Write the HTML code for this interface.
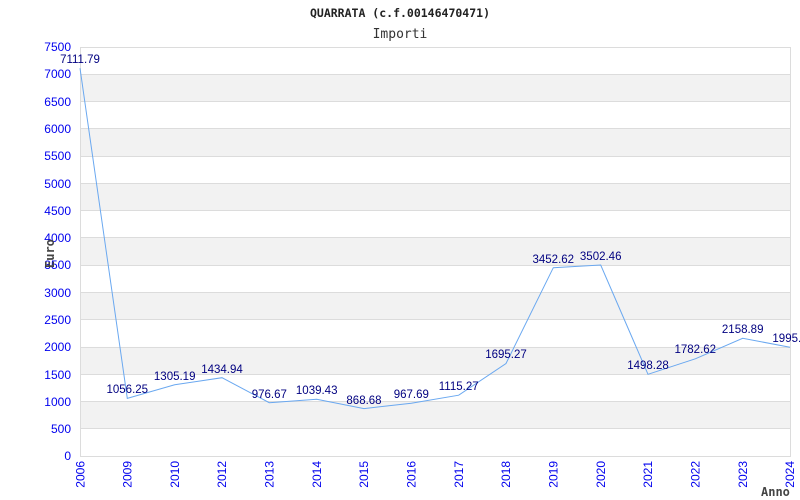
<!DOCTYPE html>
<html><head><meta charset="utf-8"><style>html,body{margin:0;padding:0;background:#fff}svg{display:block}</style></head><body>
<svg width="800" height="500" xmlns="http://www.w3.org/2000/svg">
<rect width="800" height="500" fill="#fff"/>
<text x="400" y="17" text-anchor="middle" font-family="DejaVu Sans Mono, Liberation Mono, monospace" font-weight="bold" font-size="11.5" fill="#222">QUARRATA (c.f.00146470471)</text>
<text x="400" y="38" text-anchor="middle" font-family="DejaVu Sans Mono, Liberation Mono, monospace" font-size="13" fill="#333">Importi</text>
<g fill="#f2f2f2">
<rect x="80" y="74.3" width="710" height="27.2"/>
<rect x="80" y="128.8" width="710" height="27.3"/>
<rect x="80" y="183.3" width="710" height="27.3"/>
<rect x="80" y="237.9" width="710" height="27.2"/>
<rect x="80" y="292.4" width="710" height="27.3"/>
<rect x="80" y="346.9" width="710" height="27.3"/>
<rect x="80" y="401.5" width="710" height="27.2"/>
</g>
<g stroke="#dcdcdc" stroke-width="1">
<line x1="80" x2="790" y1="47.5" y2="47.5"/><line x1="80" x2="790" y1="74.5" y2="74.5"/><line x1="80" x2="790" y1="101.5" y2="101.5"/><line x1="80" x2="790" y1="128.5" y2="128.5"/><line x1="80" x2="790" y1="156.5" y2="156.5"/><line x1="80" x2="790" y1="183.5" y2="183.5"/><line x1="80" x2="790" y1="210.5" y2="210.5"/><line x1="80" x2="790" y1="237.5" y2="237.5"/><line x1="80" x2="790" y1="265.5" y2="265.5"/><line x1="80" x2="790" y1="292.5" y2="292.5"/><line x1="80" x2="790" y1="319.5" y2="319.5"/><line x1="80" x2="790" y1="347.5" y2="347.5"/><line x1="80" x2="790" y1="374.5" y2="374.5"/><line x1="80" x2="790" y1="401.5" y2="401.5"/><line x1="80" x2="790" y1="428.5" y2="428.5"/><line x1="80" x2="790" y1="456.5" y2="456.5"/>
<line x1="80.5" x2="80.5" y1="47" y2="457"/><line x1="790.5" x2="790.5" y1="47" y2="457"/>
</g>
<g font-family="Liberation Sans, sans-serif" font-size="12" fill="#0000ee" text-anchor="end">
<text x="71" y="51">7500</text><text x="71" y="78">7000</text><text x="71" y="106">6500</text><text x="71" y="133">6000</text><text x="71" y="160">5500</text><text x="71" y="188">5000</text><text x="71" y="215">4500</text><text x="71" y="242">4000</text><text x="71" y="269">3500</text><text x="71" y="297">3000</text><text x="71" y="324">2500</text><text x="71" y="351">2000</text><text x="71" y="379">1500</text><text x="71" y="406">1000</text><text x="71" y="433">500</text><text x="71" y="460">0</text>
</g>
<g font-family="Liberation Sans, sans-serif" font-size="12" fill="#0000ee" text-anchor="end">
<text transform="translate(84.5,461) rotate(-90)">2006</text>
<text transform="translate(131.5,461) rotate(-90)">2009</text>
<text transform="translate(179,461) rotate(-90)">2010</text>
<text transform="translate(226,461) rotate(-90)">2012</text>
<text transform="translate(273.5,461) rotate(-90)">2013</text>
<text transform="translate(321,461) rotate(-90)">2014</text>
<text transform="translate(368,461) rotate(-90)">2015</text>
<text transform="translate(415.5,461) rotate(-90)">2016</text>
<text transform="translate(463,461) rotate(-90)">2017</text>
<text transform="translate(510,461) rotate(-90)">2018</text>
<text transform="translate(557.5,461) rotate(-90)">2019</text>
<text transform="translate(605,461) rotate(-90)">2020</text>
<text transform="translate(652,461) rotate(-90)">2021</text>
<text transform="translate(699.5,461) rotate(-90)">2022</text>
<text transform="translate(747,461) rotate(-90)">2023</text>
<text transform="translate(794,461) rotate(-90)">2024</text>
</g>
<text x="761" y="496" font-family="DejaVu Sans Mono, monospace" font-weight="bold" font-size="12" fill="#444">Anno</text>
<text transform="translate(54,268) rotate(-90)" font-family="DejaVu Sans Mono, monospace" font-weight="bold" font-size="12" fill="#444">Euro</text>
<polyline fill="none" stroke="#6aa8f0" stroke-width="1" points="80,68.2 127.3,398.4 174.7,384.8 222,377.7 269.3,402.7 316.7,399.3 364,408.6 411.3,403.2 458.7,395.2 506,363.5 553.3,267.7 600.7,265 648,374.3 695.3,358.8 742.7,338.3 790,347.2"/>
<g font-family="Liberation Sans, sans-serif" font-size="11.5" fill="#000080" text-anchor="middle">
<text x="80" y="63">7111.79</text>
<text x="127.3" y="393">1056.25</text>
<text x="174.7" y="380">1305.19</text>
<text x="222" y="373">1434.94</text>
<text x="269.3" y="398">976.67</text>
<text x="316.7" y="394">1039.43</text>
<text x="364" y="404">868.68</text>
<text x="411.3" y="398">967.69</text>
<text x="458.7" y="390">1115.27</text>
<text x="506" y="358">1695.27</text>
<text x="553.3" y="263">3452.62</text>
<text x="600.7" y="260">3502.46</text>
<text x="648" y="369">1498.28</text>
<text x="695.3" y="353">1782.62</text>
<text x="742.7" y="333">2158.89</text>
<text x="790" y="342">1995.9</text>
</g>
</svg>
</body></html>
